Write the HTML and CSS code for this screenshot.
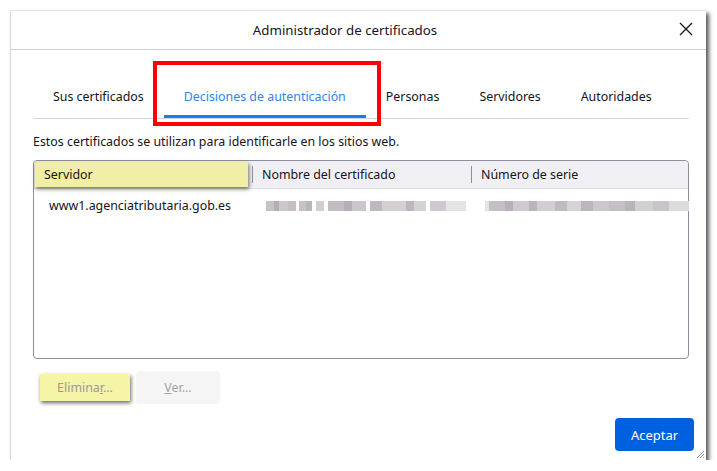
FILE: index.html
```html
<!DOCTYPE html>
<html lang="es">
<head>
<meta charset="utf-8">
<link rel="stylesheet" href="styles.css">
</head>
<body>
<div class="window">
  <div class="titlebar">
    <span class="title">Administrador de certificados</span>
    <svg class="close" width="14" height="14" viewBox="0 0 14 14"><path d="M1 1 L13 13 M13 1 L1 13" stroke="#15141a" stroke-width="1.3" fill="none"/></svg>
  </div>
  <div class="content">
    <div class="tabs">
      <div class="tab">Sus certificados</div>
      <div class="tab active">Decisiones de autenticación</div>
      <div class="tab">Personas</div>
      <div class="tab">Servidores</div>
      <div class="tab">Autoridades</div>
    </div>
    <p class="desc">Estos certificados se utilizan para identificarle en los sitios web.</p>
    <div class="table">
      <div class="thead">
        <div class="th first"><span class="hl">Servidor</span></div>
        <div class="th sep">Nombre del certificado</div>
        <div class="th sep">Número de serie</div>
      </div>
      <div class="row">
        <div class="td">www1.agenciatributaria.gob.es</div>
        <div class="td blurcell"><span class="blur b1"></span></div>
        <div class="td blurcell"><span class="blur b2"></span></div>
      </div>
    </div>
    <div class="actions">
      <button class="btn hlbtn">Elimina<u>r</u>...</button>
      <button class="btn"><u>V</u>er...</button>
    </div>
    <div class="footer">
      <button class="primary">Aceptar</button>
    </div>
  </div>
  <div class="annot"></div>
  <svg class="grip" width="10" height="10" viewBox="0 0 10 10"><path d="M9 2 L2 9 M9 5 L5 9 M9 8 L8 9" stroke="#8f8f9d" stroke-width="1"/></svg>
</div>
</body>
</html>
```
FILE: styles.css
```css
* { box-sizing: border-box; }
body {
  margin: 0;
  background: #fff;
  font-family: "Noto Sans", "Open Sans", sans-serif;
  color: #15141a;
}
.window {
  position: relative;
  margin: 10px 0 0 10px;
  width: 696px;
  height: 450px;
  background: #fff;
  border-left: 1px solid #d8d8d8;
  border-top: 1px solid #e4e4e4;
  box-shadow: 3px 3px 4px rgba(0,0,0,0.65);
  display: flex;
  flex-direction: column;
}
.titlebar {
  height: 39px;
  border-bottom: 1px solid #d0d0d7;
  display: flex;
  align-items: center;
  justify-content: center;
  position: relative;
}
.title { font-size: 13.3px; padding-right: 27px; }
.close { position: absolute; right: 13px; top: 11px; }
.content {
  padding: 0 17px 0 22px;
  flex: 1;
  display: flex;
  flex-direction: column;
}
.tabs {
  margin-top: 28px;
  display: flex;
  border-bottom: 1px solid #d6d6dc;
  width: 656px;
}
.tab {
  font-size: 12.4px;
  line-height: 20px;
  padding: 9px 20px 8px;
  border-bottom: 3px solid transparent;
  white-space: nowrap;
}
.tab.active {
  color: #2f84ee;
  border-bottom-color: #1e7cf2;
}
.desc {
  margin: 14px 0 9px;
  font-size: 12.4px;
  line-height: 18px;
}
.table {
  width: 656px;
  height: 199px;
  border: 1px solid #8f8f9d;
  border-radius: 4px;
}
.thead {
  display: grid;
  grid-template-columns: 218px 219px 1fr;
  height: 28px;
  background: #f0f0f4;
  border-radius: 4px 4px 0 0;
  border-bottom: 1px solid #e0e0e6;
}
.th {
  font-size: 12.4px;
  display: flex;
  align-items: center;
  padding-left: 10px;
  position: relative;
}
.th.first { padding: 1px 4px 1px 1px; }
.hl {
  flex: 1;
  display: flex;
  align-items: center;
  padding-left: 9px;
  background: #f1eea6;
  box-shadow: 1px 2px 4px rgba(0,0,0,0.55);
  height: 25px;
}
.th.sep::before {
  content: "";
  position: absolute;
  left: 0;
  top: 5px;
  height: 17px;
  border-left: 1px solid #8f8f9d;
}
.row {
  display: grid;
  grid-template-columns: 218px 219px 1fr;
  height: 33px;
  align-items: center;
}
.td { font-size: 12.4px; padding-left: 15px; }
.blurcell { padding-left: 14px; }
.blur {
  display: block;
  height: 10px;
  background:
    linear-gradient(90deg, #c8c2c6 0 8px, #b4adb5 8px 13px, #cdc8cc 13px 22px, #c7bec4 22px 30px, #fff 30px 33px, #c6c3c8 33px 40px, #bbb3bd 40px 46px, #fff 46px 50px, #d0ccd0 50px 58px, #fff 58px 62px, #c3bdc3 62px 78px, #b7afb8 78px 86px, #cbc6cb 86px 100px, #fff 100px 104px, #c0b8c0 104px 116px, #d3cfd3 116px 140px, #bdb6be 140px 148px, #d5d2d5 148px 160px, #fff 160px 164px, #cec9cf 164px 180px, #e6e3e6 180px 200px, transparent 200px);
}
.b1 { width: 200px; }
.b2 {
  width: 204px;
  background:
    linear-gradient(90deg, #e6e3e6 0 4px, #c5bec5 4px 20px, #b8b0b9 20px 28px, #cfcad0 28px 44px, #bab4bc 44px 52px, #d2cdd3 52px 70px, #c0bac2 70px 82px, #d6d3d7 82px 96px, #bdb5bd 96px 108px, #cbc7cc 108px 124px, #c4c0c6 124px 140px, #b9b3ba 140px 150px, #d3d0d4 150px 168px, #c8c4c9 168px 184px, #dddbdd 184px 204px);
}
.actions {
  display: flex;
  gap: 6px;
  margin-top: 12px;
  padding-left: 7px;
  align-items: center;
}
.btn {
  font-family: inherit;
  font-size: 12.4px;
  color: #a3a3a8;
  background: #f5f5f6;
  border: none;
  border-radius: 4px;
  width: 84px;
  height: 33px;
  padding: 0;
}
.hlbtn {
  width: 90px;
  height: 27px;
  background: #f6f4a6;
  border-radius: 0;
  box-shadow: 1px 2px 4px rgba(0,0,0,0.6);
  color: #9a9a9a;
}
.footer {
  display: flex;
  justify-content: flex-end;
  margin-top: 14px;
}
.primary {
  font-family: inherit;
  font-size: 13px;
  color: #fff;
  background: #0061e0;
  border: none;
  border-radius: 4px;
  width: 79px;
  height: 33px;
  margin-right: -5px;
}
.annot {
  position: absolute;
  left: 142px;
  top: 50px;
  width: 228px;
  height: 65px;
  border: 4px solid #ff0000;
}
.grip { position: absolute; right: 1px; bottom: 1px; }
```
